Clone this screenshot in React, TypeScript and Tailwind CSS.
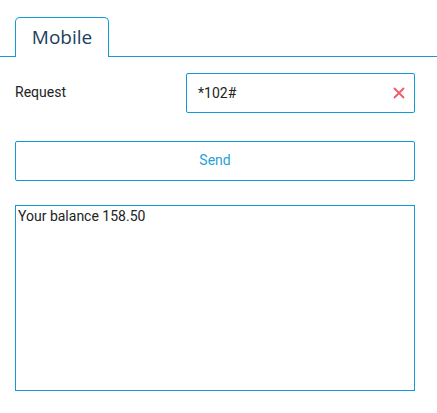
export default function App() {
    return (
        <div className="w-[437px] h-[413px] bg-white pt-[17px] font-['Roboto',sans-serif] text-[14px] text-[#222]">
            <div className="flex items-end border-b border-[#0f9bd7] pl-[15px]">
                <div className="w-[94px] h-[40px] -mb-px flex items-center justify-center border border-b-0 border-[#0f9bd7] rounded-t-[5px] bg-white">
                    <span className="font-['Open_Sans',sans-serif] text-[19px] text-[#1b3f5e]">
                        Mobile
                    </span>
                </div>
            </div>

            <div className="pl-[15px] pr-[22px]">
                <div className="flex items-center mt-[16px]">
                    <label className="w-[171px] -mt-[2px]">Request</label>
                    <div className="flex-1 h-[40px] flex items-center border border-[#0f9bd7] rounded-[2px] pl-[11px] pr-[9px]">
                        <input
                            type="text"
                            defaultValue="*102#"
                            className="flex-1 outline-none bg-transparent text-[#222]"
                        />
                        <svg width="12" height="12" viewBox="0 0 12 12" className="shrink-0">
                            <path d="M1 1L11 11M11 1L1 11" stroke="#f05a6a" strokeWidth="1.8" />
                        </svg>
                    </div>
                </div>

                <button className="mt-[28px] w-full h-[40px] border border-[#0f9bd7] rounded-[2px] text-[#2a9fd8] bg-white pb-[2px]">
                    Send
                </button>

                <textarea
                    className="block mt-[24px] w-full h-[186px] border border-[#0f9bd7] resize-none outline-none px-[2px] py-0 leading-[20px] text-[#222]"
                    defaultValue="Your balance 158.50"
                />
            </div>
        </div>
    );
}
